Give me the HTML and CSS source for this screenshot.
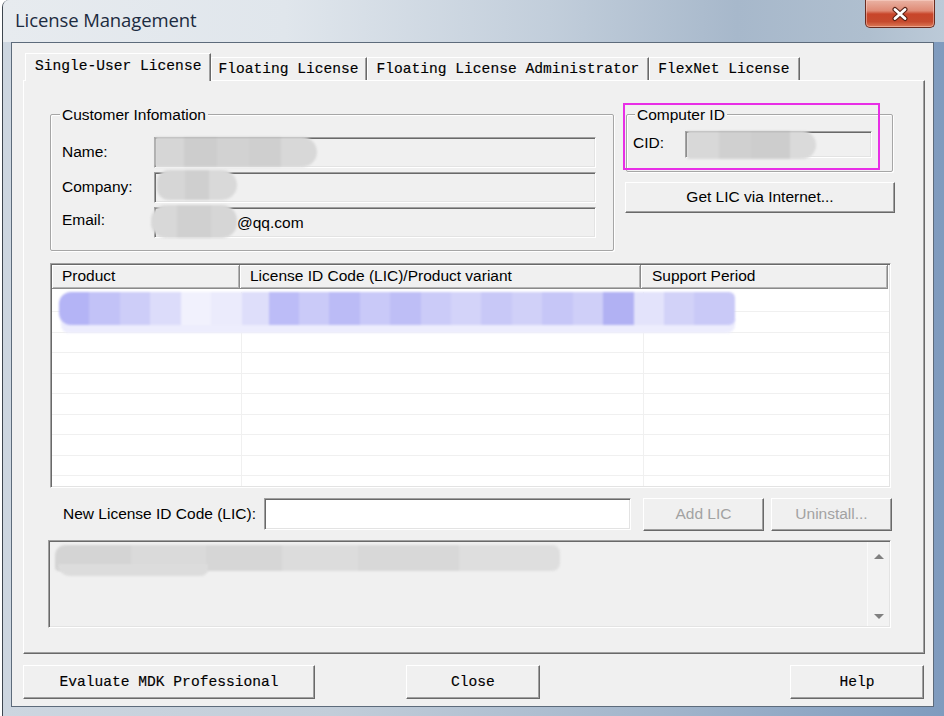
FILE: index.html
```html
<!DOCTYPE html>
<html>
<head>
<meta charset="utf-8">
<title>License Management</title>
<link rel="stylesheet" href="styles.css">
</head>
<body>
<div class="window">
  <div class="titlebar">
    <span class="title">License Management</span>
    <div class="close-btn">
      <svg width="20" height="16" viewBox="0 0 20 16">
        <path d="M5 3.5 L15 12.5 M15 3.5 L5 12.5" stroke="#5a2216" stroke-width="5" stroke-linecap="round" fill="none"/>
        <path d="M5 3.5 L15 12.5 M15 3.5 L5 12.5" stroke="#ffffff" stroke-width="2.8" stroke-linecap="round" fill="none"/>
      </svg>
    </div>
  </div>
  <div class="client">
    <div class="tabs">
      <div class="tab active">Single-User License</div>
      <div class="tab tab-floating">Floating License</div>
      <div class="tab">Floating License Administrator</div>
      <div class="tab tab-flexnet">FlexNet License</div>
    </div>
    <div class="tabpage">
      <div class="top-row">
        <div class="group group-customer">
          <span class="legend">Customer Infomation</span>
          <div class="form-grid">
            <span class="lbl">Name:</span>
            <div class="edit ro"><span class="blob blob-name"></span></div>
            <span class="lbl">Company:</span>
            <div class="edit ro"><span class="blob blob-company"></span></div>
            <span class="lbl lbl-email">Email:</span>
            <div class="edit ro edit-email"><span class="blob blob-email"></span>@qq.com</div>
          </div>
        </div>
        <div class="right-col">
          <div class="group group-cid">
            <span class="legend legend-cid">Computer ID</span>
            <div class="cid-row">
              <span class="lbl cid-lbl">CID:</span>
              <div class="edit ro cid-edit"><span class="blob blob-cid"></span></div>
            </div>
          </div>
          <div class="btn btn-getlic">Get LIC via Internet...</div>
          <div class="highlight"></div>
        </div>
      </div>

      <div class="listview">
        <div class="lv-header">
          <div class="hcell hc1">Product</div>
          <div class="hcell hc2">License ID Code (LIC)/Product variant</div>
          <div class="hcell hc3">Support Period</div>
        </div>
        <div class="lv-body">
          <div class="lv-row"><div class="cell c1"></div><div class="cell c2"></div><div class="cell c3"></div></div>
          <div class="lv-row"><div class="cell c1"></div><div class="cell c2"></div><div class="cell c3"></div></div>
          <div class="lv-row"><div class="cell c1"></div><div class="cell c2"></div><div class="cell c3"></div></div>
          <div class="lv-row"><div class="cell c1"></div><div class="cell c2"></div><div class="cell c3"></div></div>
          <div class="lv-row"><div class="cell c1"></div><div class="cell c2"></div><div class="cell c3"></div></div>
          <div class="lv-row"><div class="cell c1"></div><div class="cell c2"></div><div class="cell c3"></div></div>
          <div class="lv-row"><div class="cell c1"></div><div class="cell c2"></div><div class="cell c3"></div></div>
          <div class="lv-row"><div class="cell c1"></div><div class="cell c2"></div><div class="cell c3"></div></div>
          <div class="lv-row"><div class="cell c1"></div><div class="cell c2"></div><div class="cell c3"></div></div>
          <div class="lv-row"><div class="cell c1"></div><div class="cell c2"></div><div class="cell c3"></div></div>
          <span class="blob blob-row2"></span>
          <span class="blob blob-row"></span>
        </div>
      </div>

      <div class="newlic-row">
        <span class="lbl newlic-lbl">New License ID Code (LIC):</span>
        <div class="edit newlic-edit"></div>
        <div class="btn btn-small btn-disabled btn-add">Add LIC</div>
        <div class="btn btn-small btn-disabled btn-uninstall">Uninstall...</div>
      </div>

      <div class="memo">
        <div class="memo-text"><span class="blob blob-memo"></span><span class="blob blob-memo2"></span></div>
        <div class="scrollbar">
          <span class="arrow arrow-up"></span>
          <span class="arrow arrow-down"></span>
        </div>
      </div>
    </div>

    <div class="bottom-row">
      <div class="btn mono btn-evaluate">Evaluate MDK Professional</div>
      <div class="btn mono btn-close">Close</div>
      <div class="btn mono btn-help">Help</div>
    </div>
  </div>
</div>
</body>
</html>
```

FILE: styles.css
```css
* { box-sizing: border-box; }

html, body {
  margin: 0;
  padding: 0;
  background: #ffffff;
  overflow: hidden;
}

body {
  font-family: "Liberation Sans", Arial, sans-serif;
  font-size: 15.5px;
  color: #000;
}

.window {
  width: 942px;
  height: 716px;
  margin-left: 2px;
  border-left: 1px solid #3e464f;
  border-top-left-radius: 7px;
  display: flex;
  flex-direction: column;
  background: linear-gradient(90deg, #cdd6e0 0%, #c2cdd9 35%, #a2b5cb 70%, #7f9bbe 100%);
  overflow: hidden;
}

/* ---------- title bar ---------- */
.titlebar {
  height: 42px;
  flex: none;
  display: flex;
  align-items: flex-start;
  padding-left: 12px;
  background: linear-gradient(90deg, #e7ebef 0%, #e0e6ec 30%, #c2cedb 58%, #a7b8cb 78%, #afbfcf 92%, #bccad8 100%);
}

.title {
  margin-top: 8px;
  line-height: 24px;
  font-family: "Open Sans", "Noto Sans", sans-serif;
  font-size: 18.5px;
  color: #1c2b40;
  letter-spacing: -0.1px;
}

.close-btn {
  margin-left: auto;
  margin-right: 9px;
  width: 70px;
  height: 28px;
  border: 1px solid #6a2b1f;
  border-top: none;
  border-radius: 0 0 5px 5px;
  background: linear-gradient(180deg, #eab3a4 0%, #df8a75 40%, #c8452a 52%, #c64a2e 80%, #dc7a57 100%);
  box-shadow: inset 0 0 0 1px rgba(255, 220, 210, 0.45);
  display: flex;
  align-items: center;
  justify-content: center;
}

/* ---------- client ---------- */
.client {
  flex: 1;
  margin: 0 10px 9px 8px;
  border: 1px solid #5d6b7b;
  background: #f0f0f0;
  padding: 10px 8px 0 11px;
  display: flex;
  flex-direction: column;
}

.mono {
  font-family: "Liberation Mono", "Courier New", monospace;
  font-size: 14.6px;
  -webkit-text-stroke: 0.15px #000;
}

/* ---------- tabs ---------- */
.tabs {
  display: flex;
  align-items: flex-end;
  height: 27px;
  margin-left: 2px;
}

.tab {
  height: 23px;
  padding: 0 9px;
  line-height: 22px;
  white-space: nowrap;
  background: #f0f0f0;
  border-top: 1px solid #ffffff;
  border-left: 1px solid #ffffff;
  border-right: 1px solid #696969;
  box-shadow: inset -1px 0 0 #a0a0a0;
  font-family: "Liberation Mono", "Courier New", monospace;
  font-size: 14.6px;
  -webkit-text-stroke: 0.15px #000;
}

.tab-floating { padding: 0 7px 0 6px; }
.tab-flexnet { padding: 0 9px 0 8px; }

.tab.active {
  height: 28px;
  margin-bottom: -1px;
  padding-bottom: 2px;
  line-height: 25px;
  position: relative;
  z-index: 1;
}

.tabpage {
  height: 574px;
  flex: none;
  border-top: 1px solid #ffffff;
  border-left: 1px solid #ffffff;
  border-right: 1px solid #696969;
  border-bottom: 1px solid #696969;
  box-shadow: inset -1px -1px 0 #a0a0a0;
  padding: 33px 0 0 26px;
}

/* ---------- group boxes ---------- */
.top-row {
  display: flex;
  align-items: flex-start;
}

.group {
  position: relative;
  border: 1px solid #a6a6a6;
  box-shadow: inset 1px 1px 0 #ffffff, 1px 1px 0 #ffffff;
  border-radius: 2px;
}

.legend {
  position: absolute;
  top: -9px;
  left: 9px;
  padding: 0 2px;
  line-height: 18px;
  background: #f0f0f0;
  white-space: nowrap;
}

.legend-cid { left: 8px; }

.group-customer {
  width: 564px;
  height: 137px;
}

.form-grid {
  display: grid;
  grid-template-columns: 92px 442px;
  grid-auto-rows: 31px;
  row-gap: 4px;
  padding: 22px 0 0 11px;
  align-items: center;
}

.lbl {
  white-space: nowrap;
  line-height: 18px;
  margin-top: -2px;
}

.lbl-email { margin-top: -6px; }

.edit {
  position: relative;
  height: 100%;
  background: #ffffff;
  border-top: 1px solid #a0a0a0;
  border-left: 1px solid #a0a0a0;
  border-right: 1px solid #ffffff;
  border-bottom: 1px solid #ffffff;
  box-shadow: inset 1px 1px 0 #696969, inset -1px -1px 0 #e3e3e3;
}

.edit.ro { background: #f0f0f0; }

.edit-email {
  padding-left: 82px;
  line-height: 29px;
}

.right-col {
  position: relative;
  margin-left: 11px;
  width: 270px;
}

.group-cid {
  margin-left: 1px;
  width: 267px;
  height: 58px;
}

.cid-row {
  display: flex;
  align-items: center;
  padding: 16px 0 0 6px;
}

.cid-lbl {
  width: 52px;
  margin-top: -3px;
}

.cid-edit {
  width: 187px;
  height: 27px;
}

.btn {
  display: flex;
  align-items: center;
  justify-content: center;
  white-space: nowrap;
  background: #f0f0f0;
  border-top: 1px solid #ffffff;
  border-left: 1px solid #ffffff;
  border-right: 1px solid #696969;
  border-bottom: 1px solid #696969;
  box-shadow: inset -1px -1px 0 #a0a0a0;
}

.btn-getlic {
  margin-top: 10px;
  width: 270px;
  height: 31px;
  padding-bottom: 2px;
}

.highlight {
  position: absolute;
  left: -2px;
  top: -11px;
  width: 257px;
  height: 67px;
  border: 2px solid #e82ee6;
}

/* ---------- blurred redactions ---------- */
.blob {
  position: absolute;
  display: block;
  filter: blur(1.2px);
}

.blob-name {
  left: 0;
  top: -1px;
  width: 162px;
  height: 30px;
  border-radius: 2px 15px 15px 2px;
  background: linear-gradient(90deg, #d6d6d6 0 18%, #cdcdcd 18% 38%, #d2d2d2 38% 58%, #cfcfcf 58% 78%, #d8d8d8 78% 100%);
}

.blob-company {
  left: 2px;
  top: -3px;
  width: 80px;
  height: 30px;
  border-radius: 12px 15px 15px 12px;
  background: linear-gradient(90deg, #d6d6d6 0 35%, #cfcfcf 35% 65%, #d9d9d9 65% 100%);
}

.blob-email {
  left: -4px;
  top: -3px;
  width: 86px;
  height: 33px;
  border-radius: 15px;
  background: linear-gradient(90deg, #d8d8d8 0 30%, #d0d0d0 30% 70%, #d6d6d6 70% 100%);
}

.blob-cid {
  left: 1px;
  top: -1px;
  width: 129px;
  height: 28px;
  border-radius: 2px 14px 14px 2px;
  background: linear-gradient(90deg, #d8d8d8 0 25%, #d0d0d0 25% 50%, #cdcdcd 50% 80%, #dadada 80% 100%);
}

/* ---------- list view ---------- */
.listview {
  margin-top: 12px;
  width: 841px;
  height: 225px;
  background: #ffffff;
  border-top: 1px solid #a0a0a0;
  border-left: 1px solid #a0a0a0;
  border-right: 1px solid #ffffff;
  border-bottom: 1px solid #ffffff;
  box-shadow: inset 1px 1px 0 #696969, inset -1px -1px 0 #e3e3e3;
  padding: 1px;
  display: flex;
  flex-direction: column;
  overflow: hidden;
}

.lv-header {
  display: flex;
  height: 24px;
  flex: none;
}

.hcell {
  height: 24px;
  line-height: 22px;
  padding-left: 10px;
  white-space: nowrap;
  background: #f0f0f0;
  border-right: 1px solid #8a8a8a;
  border-bottom: 1px solid #8a8a8a;
  box-shadow: inset 1px 1px 0 #ffffff, inset -1px -1px 0 #b4b4b4;
}

.hc1 { width: 188px; }
.hc2 { width: 401px; }
.hc3 { width: 247px; padding-left: 11px; }

.lv-body {
  position: relative;
  flex: 1;
  padding-top: 2.5px;
  overflow: hidden;
}

.lv-row {
  display: flex;
  height: 20.5px;
  border-bottom: 1px solid #f0f0f0;
}

.cell { height: 100%; }
.c1 { width: 190px; border-right: 1px solid #f0f0f0; }
.c2 { width: 402px; border-right: 1px solid #f0f0f0; }
.c3 { flex: 1; }

.blob-row {
  left: 7px;
  top: 3px;
  width: 676px;
  height: 33px;
  border-radius: 12px 6px 6px 12px;
  filter: blur(0.8px);
  background: linear-gradient(90deg,
    #b4b4f6 0 4.5%, #c2c2f7 4.5% 9%, #cdcdf8 9% 13.5%, #dcdcfa 13.5% 18%,
    #f1f1fd 18% 22.5%, #ebebfc 22.5% 27%, #dedefa 27% 31%, #bcbcf7 31% 35.5%,
    #cacaf8 35.5% 40%, #bbbbf6 40% 44.5%, #c9c9f8 44.5% 49%, #bebef6 49% 53.5%,
    #cbcbf8 53.5% 58%, #d3d3f9 58% 62.5%, #c8c8f7 62.5% 67%, #d0d0f8 67% 71.5%,
    #c6c6f7 71.5% 76%, #cfcff8 76% 80.5%, #b1b1f3 80.5% 85%, #e3e3fb 85% 89.5%,
    #d2d2f8 89.5% 94%, #c9c9f7 94% 100%);
}

.blob-row2 {
  left: 9px;
  top: 30px;
  width: 674px;
  height: 14px;
  border-radius: 0 0 8px 8px;
  background: #ededfd;
}

/* ---------- new LIC row ---------- */
.newlic-row {
  margin-top: 10px;
  height: 33px;
  display: flex;
  align-items: flex-start;
}

.newlic-lbl {
  width: 214px;
  padding-left: 13px;
  line-height: 32px;
  margin-top: 0;
}

.newlic-edit {
  width: 367px;
  height: 32px;
}

.btn-small {
  width: 121px;
  height: 33px;
  padding-bottom: 2px;
}

.btn-disabled { color: #a2a2a2; }

.btn-add { margin-left: 12px; }
.btn-uninstall { margin-left: 7px; }

/* ---------- memo ---------- */
.memo {
  margin-top: 9px;
  margin-left: -2px;
  width: 843px;
  height: 88px;
  background: #f0f0f0;
  border-top: 1px solid #a0a0a0;
  border-left: 1px solid #a0a0a0;
  border-right: 1px solid #ffffff;
  border-bottom: 1px solid #ffffff;
  box-shadow: inset 1px 1px 0 #696969, inset -1px -1px 0 #e3e3e3;
  padding: 1px;
  display: flex;
}

.memo-text {
  position: relative;
  flex: 1;
}

.blob-memo {
  left: 5px;
  top: 3px;
  width: 505px;
  height: 26px;
  border-radius: 10px 8px 8px 4px;
  background: linear-gradient(90deg, #d4d4d4 0 15%, #dadada 15% 30%, #d6d6d6 30% 45%, #dcdcdc 45% 60%, #d8d8d8 60% 80%, #dedede 80% 100%);
}

.blob-memo2 {
  left: 8px;
  top: 22px;
  width: 150px;
  height: 12px;
  border-radius: 0 0 12px 20px;
  background: #dcdcdc;
}

.scrollbar {
  position: relative;
  width: 22px;
  height: 100%;
  background: #f2f2f2;
  border-left: 1px solid #fafafa;
}

.arrow {
  position: absolute;
  left: 6px;
  width: 0;
  height: 0;
  border-left: 5px solid transparent;
  border-right: 5px solid transparent;
}

.arrow-up {
  top: 12px;
  border-bottom: 5px solid #808080;
}

.arrow-down {
  top: 72px;
  border-top: 5px solid #808080;
}

/* ---------- bottom buttons ---------- */
.bottom-row {
  margin-top: 11px;
  height: 34px;
  display: flex;
}

.bottom-row .btn {
  height: 34px;
  padding-bottom: 1px;
}

.btn-evaluate { width: 292px; }
.btn-close { width: 134px; margin-left: 91px; }
.btn-help { width: 134px; margin-left: auto; margin-right: 1px; }
```
